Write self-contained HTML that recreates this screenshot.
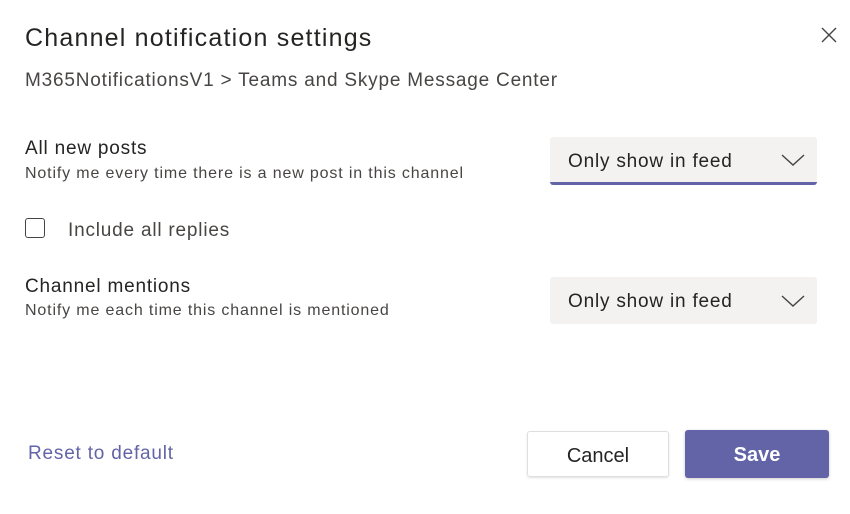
<!DOCTYPE html>
<html><head><style>
body{margin:0;width:850px;height:514px;background:#fff;font-family:"Liberation Sans",sans-serif;color:#252423;position:relative;overflow:hidden}
.a{position:absolute;white-space:nowrap}
.ls{letter-spacing:0.8px}
.dd{position:absolute;left:550px;width:267px;background:#f3f2f1;border-radius:3px;box-sizing:border-box;padding-left:18px;font-size:19px;color:#252423;letter-spacing:0.8px}
.dd svg{position:absolute;right:12px;top:50%;margin-top:-6px}
</style></head><body>
<div class="a" style="left:25px;top:24px;font-size:25px;color:#252423;letter-spacing:1.2px">Channel notification settings</div>
<svg class="a" style="left:821px;top:27px" width="16" height="16"><path d="M1 1L15 15M15 1L1 15" stroke="#444" stroke-width="1.4"/></svg>
<div class="a ls" style="left:25px;top:70px;font-size:19px;color:#484644">M365NotificationsV1 &gt; Teams and Skype Message Center</div>

<div class="a ls" style="left:25px;top:138px;font-size:19px">All new posts</div>
<div class="a" style="left:25px;top:165px;font-size:16px;color:#484644;letter-spacing:0.85px">Notify me every time there is a new post in this channel</div>
<div class="dd" style="top:137px;height:48px;line-height:50px;border-bottom:3px solid #6264a7">Only show in feed<svg width="24" height="12"><path d="M1 1L12 11L23 1" fill="none" stroke="#444" stroke-width="1.4"/></svg></div>

<div class="a" style="left:25px;top:218px;width:20px;height:20px;border:1.5px solid #444;border-radius:3px;box-sizing:border-box"></div>
<div class="a ls" style="left:68px;top:220px;font-size:19px;color:#484644">Include all replies</div>

<div class="a ls" style="left:25px;top:276px;font-size:19px">Channel mentions</div>
<div class="a" style="left:25px;top:302px;font-size:16px;color:#484644;letter-spacing:0.85px">Notify me each time this channel is mentioned</div>
<div class="dd" style="top:277px;height:47px;line-height:50px">Only show in feed<svg width="24" height="12"><path d="M1 1L12 11L23 1" fill="none" stroke="#444" stroke-width="1.4"/></svg></div>

<div class="a ls" style="left:28px;top:443px;font-size:19px;color:#6264a7">Reset to default</div>
<div class="a" style="left:527px;top:431px;width:142px;height:46px;border:1px solid #e1dfdd;border-radius:3px;box-sizing:border-box;box-shadow:0 1px 2px rgba(0,0,0,.12);text-align:center;line-height:48px;font-size:20px">Cancel</div>
<div class="a" style="left:685px;top:430px;width:144px;height:48px;background:#6264a7;border-radius:3px;box-shadow:0 1px 3px rgba(0,0,0,.2);text-align:center;line-height:51px;font-size:20px;font-weight:bold;color:#fff">Save</div>
</body></html>
